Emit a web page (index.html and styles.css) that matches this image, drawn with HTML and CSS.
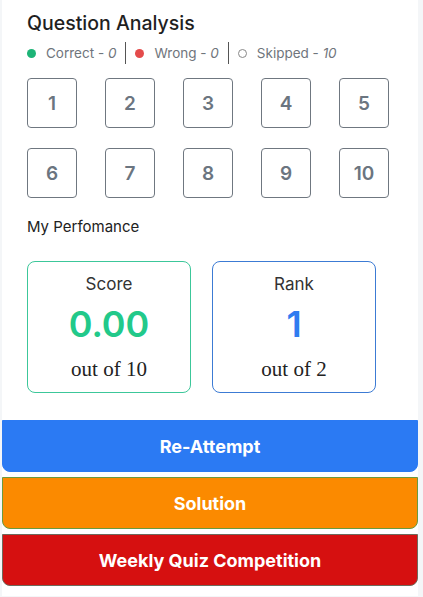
FILE: index.html
```html
<!DOCTYPE html>
<html lang="en">
<head>
    <meta charset="UTF-8">
    <meta name="viewport" content="width=device-width, initial-scale=1.0">
    <title>Question Analysis</title>
    <link rel="stylesheet" href="styles.css">
</head>
<body>
    <div class="card">
        <div class="content">
            <h2 class="title">Question Analysis</h2>
            <div class="legend">
                <span class="item"><span class="dot dot-green"></span>Correct - <i>0</i></span>
                <span class="sep"></span>
                <span class="item"><span class="dot dot-red"></span>Wrong - <i>0</i></span>
                <span class="sep"></span>
                <span class="item"><span class="dot dot-empty"></span>Skipped - <i>10</i></span>
            </div>

            <div class="grid">
                <div class="qbox">1</div>
                <div class="qbox">2</div>
                <div class="qbox">3</div>
                <div class="qbox">4</div>
                <div class="qbox">5</div>
                <div class="qbox">6</div>
                <div class="qbox">7</div>
                <div class="qbox">8</div>
                <div class="qbox">9</div>
                <div class="qbox">10</div>
            </div>

            <h3 class="subtitle">My Perfomance</h3>

            <div class="stats">
                <div class="stat stat-score">
                    <div class="stat-label">Score</div>
                    <div class="stat-value">0.00</div>
                    <div class="stat-out">out of 10</div>
                </div>
                <div class="stat stat-rank">
                    <div class="stat-label">Rank</div>
                    <div class="stat-value">1</div>
                    <div class="stat-out">out of 2</div>
                </div>
            </div>
        </div>

        <div class="actions">
            <button class="btn btn-blue">Re-Attempt</button>
            <button class="btn btn-orange">Solution</button>
            <button class="btn btn-red">Weekly Quiz Competition</button>
        </div>
    </div>
</body>
</html>
```

FILE: styles.css
```css
body {
    margin: 0;
    padding: 0;
    background-color: #f4f6f8;
    font-family: Inter, "Noto Sans", sans-serif;
    color: #222;
}

.card {
    background: white;
    margin: 0 5px 0 2px;
    padding-bottom: 10px;
}

.content {
    padding: 11px 25px 0 25px;
}

.title {
    margin: 0;
    font-size: 19.5px;
    font-weight: 500;
    line-height: 24px;
    color: #1f1f1f;
}

.legend {
    display: flex;
    align-items: center;
    margin-top: 7px;
    height: 22px;
    font-size: 13.5px;
    color: #6f757c;
}

.item {
    display: flex;
    align-items: center;
    white-space: pre;
}

.dot {
    width: 9px;
    height: 9px;
    border-radius: 50%;
    margin-right: 10px;
    box-sizing: border-box;
}

.dot-green {
    background: #1db477;
}

.dot-red {
    background: #e44b4b;
}

.dot-empty {
    border: 1px solid #888;
}

.sep {
    width: 1px;
    height: 22px;
    background: #555;
    margin: 0 9px;
}

.grid {
    display: grid;
    grid-template-columns: repeat(5, 50px);
    column-gap: 28px;
    row-gap: 20px;
    margin-top: 14px;
}

.qbox {
    height: 50px;
    border: 1px solid #6f7780;
    border-radius: 4px;
    box-sizing: border-box;
    display: flex;
    align-items: center;
    justify-content: center;
    font-size: 19px;
    font-weight: 600;
    color: #6b7580;
}

.subtitle {
    margin: 19px 0 0 0;
    font-size: 15px;
    font-weight: 400;
    line-height: 20px;
    color: #222;
}

.stats {
    display: flex;
    gap: 21px;
    margin-top: 24px;
}

.stat {
    width: 164px;
    height: 132px;
    box-sizing: border-box;
    border: 1px solid;
    border-radius: 8px;
    text-align: center;
    padding-top: 11px;
}

.stat-score {
    border-color: #3cc79a;
}

.stat-rank {
    border-color: #3c7bd4;
}

.stat-label {
    font-size: 17px;
    line-height: 22px;
    color: #333;
}

.stat-value {
    font-size: 36px;
    font-weight: 600;
    line-height: 44px;
    margin-top: 7px;
}

.stat-score .stat-value {
    color: #22c98a;
}

.stat-rank .stat-value {
    color: #2f7cf0;
}

.stat-out {
    font-family: "Liberation Serif", "DejaVu Serif", serif;
    font-size: 21px;
    line-height: 24px;
    margin-top: 11px;
    color: #222;
}

.actions {
    display: flex;
    flex-direction: column;
    gap: 5px;
    margin-top: 27px;
}

.btn {
    display: block;
    width: 100%;
    height: 52px;
    border: 1px solid transparent;
    border-radius: 0 0 8px 8px;
    font-family: Inter, "Noto Sans", sans-serif;
    font-size: 18px;
    font-weight: 700;
    color: white;
    cursor: pointer;
}

.btn-blue {
    background-color: #2b7af3;
    border-color: #2b7af3;
}

.btn-orange {
    background-color: #fb8a00;
    border-color: #6a9a40;
}

.btn-red {
    background-color: #d61010;
    border-color: #6e6a5c;
}
```
